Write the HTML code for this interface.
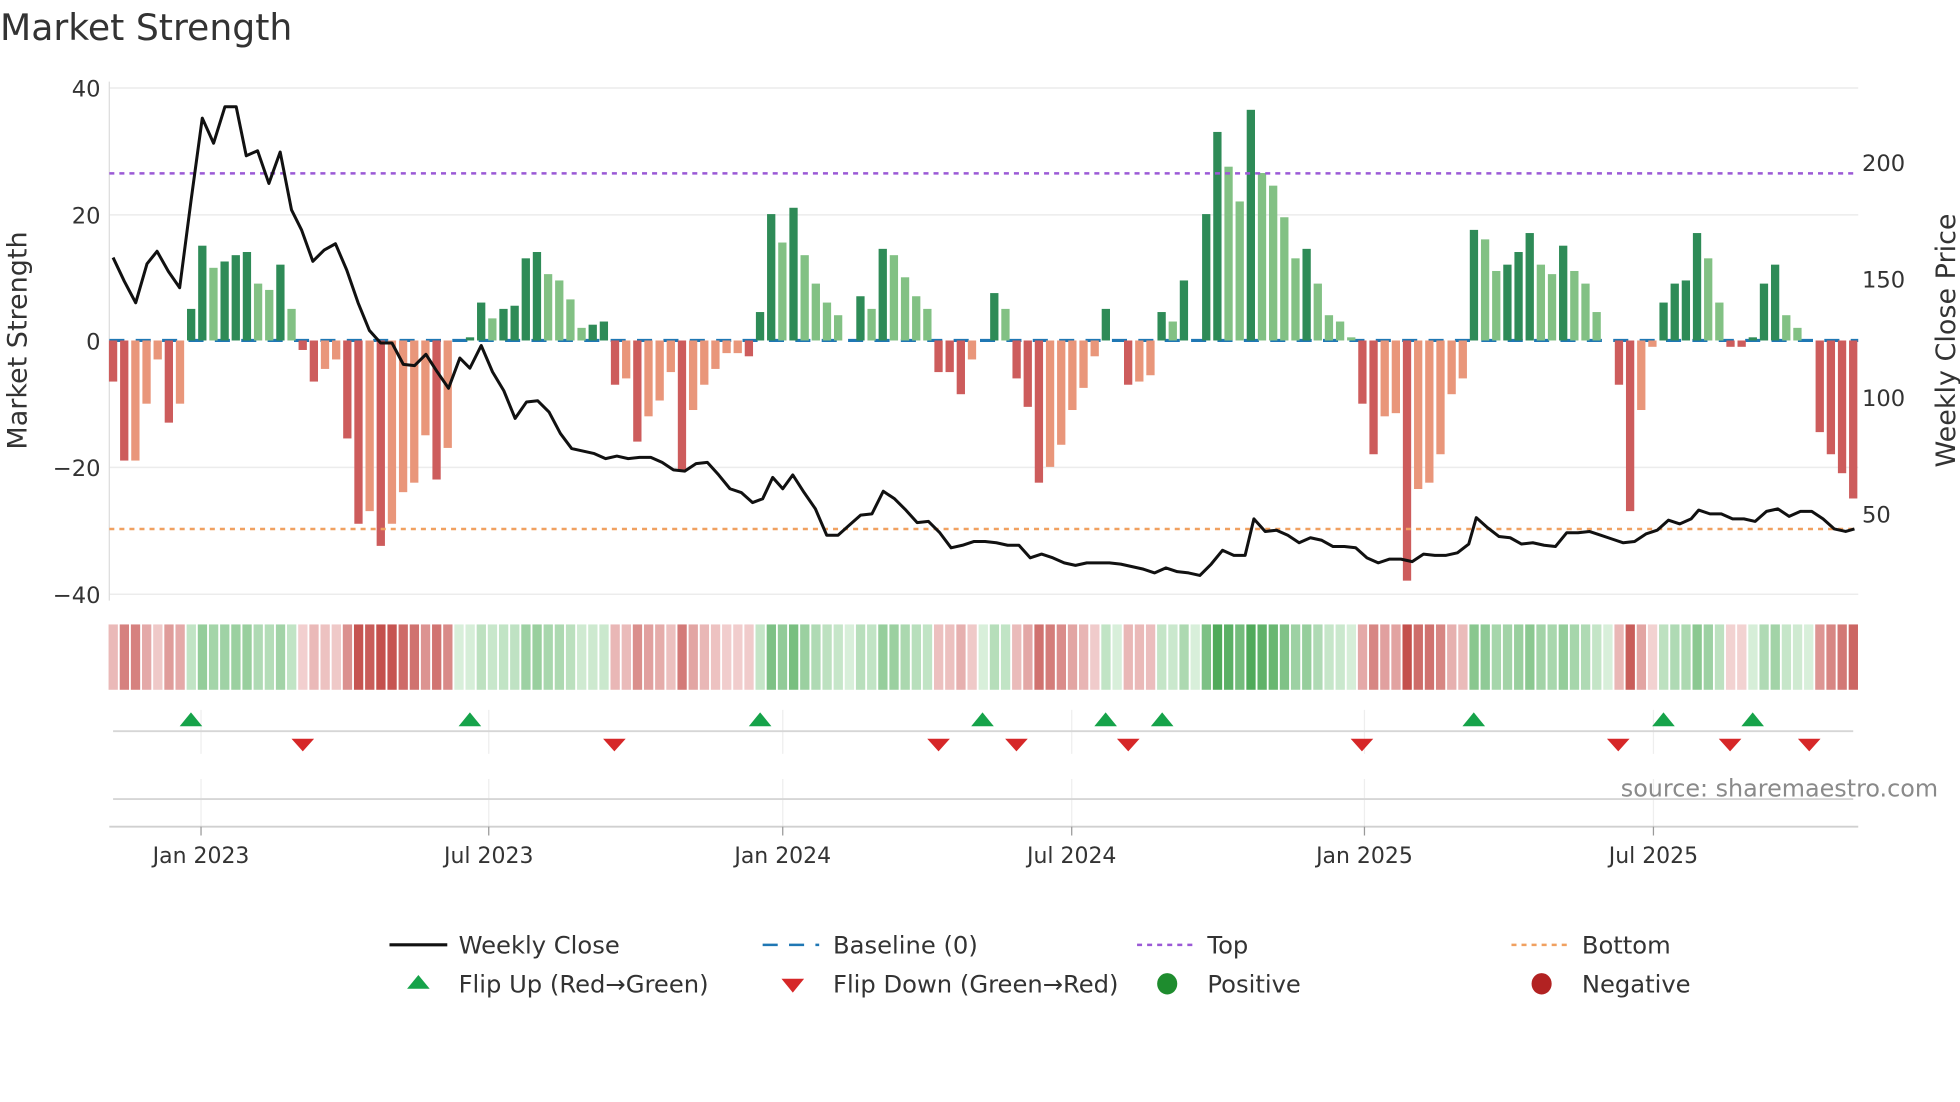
<!DOCTYPE html>
<html><head><meta charset="utf-8"><style>
html,body{margin:0;padding:0;background:#fff;width:1960px;height:1102px;overflow:hidden}
svg{display:block}
text{font-family:"DejaVu Sans","Liberation Sans",sans-serif;fill:#333}
</style></head><body>
<svg id="s" width="1960" height="1102" viewBox="0 0 1560 877.1">
<text x="0" y="32" font-size="28.8">Market Strength</text>
<g stroke="#ececec" stroke-width="1.2">
<line x1="87" y1="70" x2="1479" y2="70"/><line x1="87" y1="171" x2="1479" y2="171"/>
<line x1="87" y1="372" x2="1479" y2="372"/><line x1="87" y1="473" x2="1479" y2="473"/>
</g>
<line x1="87" y1="65" x2="87" y2="478" stroke="#ddd" stroke-width="1"/>
<g font-size="18" text-anchor="end">
<text x="80" y="77">40</text><text x="80" y="178">20</text><text x="80" y="278">0</text>
<text x="80" y="379">−20</text><text x="80" y="480">−40</text></g>
<g font-size="18">
<text x="1482" y="136">200</text><text x="1482" y="229">150</text><text x="1482" y="323">100</text><text x="1482" y="416">50</text></g>
<text transform="translate(21,271) rotate(-90)" font-size="21.5" text-anchor="middle">Market Strength</text>
<text transform="translate(1556,271) rotate(-90)" font-size="21.5" text-anchor="middle">Weekly Close Price</text>
<line x1="87" y1="271" x2="1479" y2="271" stroke="#1f77b4" stroke-width="2.5" stroke-dasharray="12,9"/>
<g id="bars"></g>
<line x1="87" y1="138" x2="1479" y2="138" stroke="#9b59d6" stroke-width="2" stroke-dasharray="4,4"/>
<line x1="87" y1="421" x2="1479" y2="421" stroke="#f0a060" stroke-width="2" stroke-dasharray="4,4"/>
<polyline id="price" fill="none" stroke="#111" stroke-width="2.4" stroke-linejoin="round"/>
<g id="heat"></g>
<g stroke="#eee" stroke-width="1">
<line x1="160" y1="565" x2="160" y2="600"/><line x1="389" y1="565" x2="389" y2="600"/><line x1="623" y1="565" x2="623" y2="600"/><line x1="853" y1="565" x2="853" y2="600"/><line x1="1086" y1="565" x2="1086" y2="600"/><line x1="1316" y1="565" x2="1316" y2="600"/>
<line x1="160" y1="620" x2="160" y2="658"/><line x1="389" y1="620" x2="389" y2="658"/><line x1="623" y1="620" x2="623" y2="658"/><line x1="853" y1="620" x2="853" y2="658"/><line x1="1086" y1="620" x2="1086" y2="658"/><line x1="1316" y1="620" x2="1316" y2="658"/>
</g>
<line x1="90" y1="582" x2="1475" y2="582" stroke="#d6d6d6" stroke-width="1.5"/>
<line x1="90" y1="636" x2="1475" y2="636" stroke="#d6d6d6" stroke-width="1.5"/>
<line x1="87" y1="658" x2="1479" y2="658" stroke="#d0d0d0" stroke-width="1.5"/>
<g stroke="#999" stroke-width="1"><line x1="160" y1="658" x2="160" y2="665"/><line x1="389" y1="658" x2="389" y2="665"/><line x1="623" y1="658" x2="623" y2="665"/><line x1="853" y1="658" x2="853" y2="665"/><line x1="1086" y1="658" x2="1086" y2="665"/><line x1="1316" y1="658" x2="1316" y2="665"/></g>
<g id="marks"></g>
<g font-size="17.5" text-anchor="middle">
<text x="160" y="687">Jan 2023</text><text x="389" y="687">Jul 2023</text><text x="623" y="687">Jan 2024</text>
<text x="853" y="687">Jul 2024</text><text x="1086" y="687">Jan 2025</text><text x="1316" y="687">Jul 2025</text></g>
<text x="1290" y="634" font-size="19" style="fill:#8a8a8a">source: sharemaestro.com</text>
<g font-size="19.3">
<line x1="310" y1="752" x2="356" y2="752" stroke="#111" stroke-width="2.5"/><text x="365" y="759">Weekly Close</text>
<line x1="607" y1="752" x2="652" y2="752" stroke="#1f77b4" stroke-width="2" stroke-dasharray="12,9"/><text x="663" y="759">Baseline (0)</text>
<line x1="905" y1="752" x2="950" y2="752" stroke="#9b59d6" stroke-width="2" stroke-dasharray="4,4"/><text x="961" y="759">Top</text>
<line x1="1203" y1="752" x2="1248" y2="752" stroke="#f0a060" stroke-width="2" stroke-dasharray="4,4"/><text x="1259" y="759">Bottom</text>
<polygon points="324,787 342,787 333,776" fill="#16a34a"/><text x="365" y="790">Flip Up (Red→Green)</text>
<polygon points="622,779 640,779 631,790" fill="#d62728"/><text x="663" y="790">Flip Down (Green→Red)</text>
<ellipse cx="929" cy="783" rx="8" ry="8.5" fill="#1e8c2e"/><text x="961" y="790">Positive</text>
<ellipse cx="1227" cy="783" rx="8" ry="8.5" fill="#b22222"/><text x="1259" y="790">Negative</text>
</g>
</svg>
<script>
var NS="http://www.w3.org/2000/svg";
function el(t,a,p){var e=document.createElementNS(NS,t);for(var k in a)e.setAttribute(k,a[k]);p.appendChild(e);return e;}
var d=[[-6.5,1],[-19,1],[-19,0],[-10,0],[-3,0],[-13,1],[-10,0],[5,1],[15,1],[11.5,0],[12.5,1],[13.5,1],[14,1],[9,0],[8,0],[12,1],[5,0],[-1.5,1],[-6.5,1],[-4.5,0],[-3,0],[-15.5,1],[-29,1],[-27,0],[-32.5,1],[-29,0],[-24,0],[-22.5,0],[-15,0],[-22,1],[-17,0],[0,0],[0.5,1],[6,1],[3.5,0],[5,1],[5.5,1],[13,1],[14,1],[10.5,0],[9.5,0],[6.5,0],[2,0],[2.5,1],[3,1],[-7,1],[-6,0],[-16,1],[-12,0],[-9.5,0],[-5,0],[-20.5,1],[-11,0],[-7,0],[-4.5,0],[-2,0],[-2,0],[-2.5,1],[4.5,1],[20,1],[15.5,0],[21,1],[13.5,0],[9,0],[6,0],[4,0],[0,0],[7,1],[5,0],[14.5,1],[13.5,0],[10,0],[7,0],[5,0],[-5,1],[-5,1],[-8.5,1],[-3,0],[0,0],[7.5,1],[5,0],[-6,1],[-10.5,1],[-22.5,1],[-20,0],[-16.5,0],[-11,0],[-7.5,0],[-2.5,0],[5,1],[0,0],[-7,1],[-6.5,0],[-5.5,0],[4.5,1],[3,0],[9.5,1],[0,0],[20,1],[33,1],[27.5,0],[22,0],[36.5,1],[26.5,0],[24.5,0],[19.5,0],[13,0],[14.5,1],[9,0],[4,0],[3,0],[0.5,0],[-10,1],[-18,1],[-12,0],[-11.5,0],[-38,1],[-23.5,0],[-22.5,0],[-18,0],[-8.5,0],[-6,0],[17.5,1],[16,0],[11,0],[12,1],[14,1],[17,1],[12,0],[10.5,0],[15,1],[11,0],[9,0],[4.5,0],[0,0],[-7,1],[-27,1],[-11,0],[-1,0],[6,1],[9,1],[9.5,1],[17,1],[13,0],[6,0],[-1,1],[-1,1],[0.5,1],[9,1],[12,1],[4,0],[2,0],[0,0],[-14.5,1],[-18,1],[-21,1],[-25,1]];
var n=d.length,x0=90,x1=1475,st=(x1-x0)/(n-1);
var B=document.getElementById("bars"),H=document.getElementById("heat");
function mix(a,b,t){return "rgb("+a.map(function(v,i){return Math.round(v+(b[i]-v)*t)}).join(",")+")";}
for(var i=0;i<n;i++){var v=d[i][0],x=x0+i*st;
 if(v!==0){var c=v>0?(d[i][1]?"#2e8b57":"#82c184"):(d[i][1]?"#cd5c5c":"#e9967a");
  var y=271-v*5.03;el("rect",{x:x-3.3,y:Math.min(y,271),width:6.6,height:Math.abs(v*5.03),fill:c},B);}
 var t=Math.min(1,Math.abs(v)/30);
 var hc=v>=0?mix([216,239,218],[80,170,90],t):mix([244,214,214],[196,80,76],t);
 el("rect",{x:x-3.6,y:497,width:7.4,height:52,fill:hc},H);
}
var p=[[90,205],[99,224],[108,241],[117,210],[125,200],[134,216],[143,229],[152,160],[161,94],[170,114],[179,85],[188,85],[196,124],[205,120],[214,146],[223,121],[232,167],[240,183],[249,208],[258,199],[267,194],[276,215],[285,241],[294,263],[303,273],[312,273],[321,290],[330,291],[339,282],[348,296],[357,309],[366,285],[374,293],[383,275],[392,296],[401,311],[410,333],[419,320],[428,319],[437,328],[446,345],[455,357],[464,359],[473,361],[482,365],[491,363],[500,365],[509,364],[518,364],[527,368],[536,374],[545,375],[554,369],[563,368],[572,378],[581,389],[590,392],[599,400],[607,397],[615,380],[623,389],[631,378],[640,392],[649,405],[658,426],[667,426],[676,418],[685,410],[694,409],[703,391],[712,397],[721,406],[730,416],[739,415],[748,424],[757,436],[766,434],[775,431],[784,431],[793,432],[802,434],[811,434],[820,444],[829,441],[838,444],[847,448],[856,450],[865,448],[874,448],[883,448],[892,449],[901,451],[910,453],[919,456],[928,452],[937,455],[946,456],[955,458],[964,449],[973,438],[982,442],[991,442],[998,413],[1007,423],[1016,422],[1025,426],[1034,432],[1043,428],[1052,430],[1061,435],[1070,435],[1079,436],[1088,444],[1097,448],[1106,445],[1115,445],[1124,447],[1133,441],[1142,442],[1151,442],[1160,440],[1169,433],[1175,412],[1184,420],[1193,427],[1202,428],[1211,433],[1220,432],[1229,434],[1238,435],[1247,424],[1256,424],[1265,423],[1274,426],[1283,429],[1292,432],[1301,431],[1310,425],[1319,422],[1328,414],[1337,417],[1346,413],[1352,406],[1361,409],[1370,409],[1379,413],[1388,413],[1397,415],[1406,407],[1415,405],[1424,411],[1433,407],[1442,407],[1451,413],[1460,421],[1469,423],[1476,421]];
document.getElementById("price").setAttribute("points",p.map(function(q){return q.join(",")}).join(" "));
var M=document.getElementById("marks");
[152,374,605,782,880,925,1173,1324,1395].forEach(function(x){el("polygon",{points:(x-9)+",578 "+(x+9)+",578 "+x+",567",fill:"#16a34a"},M);});
[241,489,747,809,898,1084,1288,1377,1440].forEach(function(x){el("polygon",{points:(x-9)+",588 "+(x+9)+",588 "+x+",598",fill:"#d62728"},M);});
</script>
</body></html>
